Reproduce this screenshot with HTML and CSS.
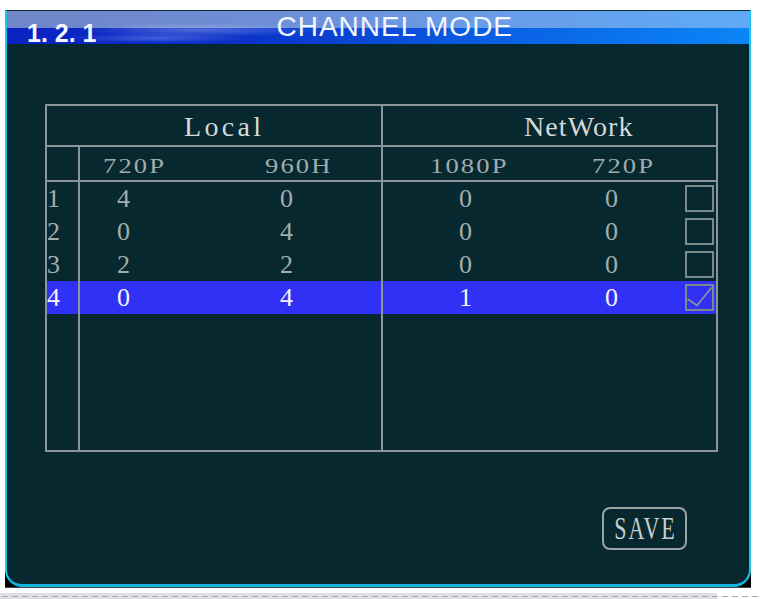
FILE: index.html
```html
<!DOCTYPE html>
<html>
<head>
<meta charset="utf-8">
<title>CHANNEL MODE</title>
<link rel="stylesheet" href="styles.css">
</head>
<body>
<div class="frame">
  <div class="panel">
    <div class="titlebar">
      <span class="crumb">1. 2. 1</span>
      <span class="title">CHANNEL MODE</span>
    </div>
    <div class="content">
      <div class="grid">
        <div class="cell h1 local br"><span class="big">Local</span></div>
        <div class="cell h1 net"><span class="big">NetWork</span></div>

        <div class="cell bt br"></div>
        <div class="cell bt hd p-l1h"><span class="hdt">720P</span></div>
        <div class="cell bt hd br p-l2h"><span class="hdt">960H</span></div>
        <div class="cell bt hd p-n1h"><span class="hdt">1080P</span></div>
        <div class="cell bt hd p-n2h"><span class="hdt">720P</span></div>
        <div class="cell bt"></div>

        <div class="cell bt br num">1</div>
        <div class="cell bt val p-l1">4</div>
        <div class="cell bt val br p-l2">0</div>
        <div class="cell bt val p-n1">0</div>
        <div class="cell bt val p-n2">0</div>
        <div class="cell bt chk"><span class="box"></span></div>

        <div class="cell br num">2</div>
        <div class="cell val p-l1">0</div>
        <div class="cell val br p-l2">4</div>
        <div class="cell val p-n1">0</div>
        <div class="cell val p-n2">0</div>
        <div class="cell chk"><span class="box"></span></div>

        <div class="cell br num">3</div>
        <div class="cell val p-l1">2</div>
        <div class="cell val br p-l2">2</div>
        <div class="cell val p-n1">0</div>
        <div class="cell val p-n2">0</div>
        <div class="cell chk"><span class="box"></span></div>

        <div class="cell br num sel">4</div>
        <div class="cell val sel p-l1">0</div>
        <div class="cell val br sel p-l2">4</div>
        <div class="cell val sel p-n1">1</div>
        <div class="cell val sel p-n2">0</div>
        <div class="cell chk sel"><span class="box"><svg width="25" height="23" viewBox="0 0 25 23"><path d="M0.5 13 L10 19.5 L24.5 1.5" fill="none" stroke="#8c9898" stroke-width="1.6"/></svg></span></div>

        <div class="cell br"></div>
        <div class="cell br span-local2"></div>
        <div class="cell span-net"></div>
      </div>
      <button class="save"><span>SAVE</span></button>
    </div>
  </div>
</div>
<div class="dash"></div>
</body>
</html>
```

FILE: styles.css
```css
html, body {
  margin: 0;
  padding: 0;
  background: #ffffff;
  overflow: hidden;
  width: 760px;
  height: 599px;
}

.frame {
  margin: 10px 0 0 5px;
  width: 746px;
  height: 577px;
  background: #000000;
  border-bottom: 1px solid #3c4446;
}

.panel {
  box-sizing: border-box;
  height: 577px;
  background: #082830;
  border-top: 1px solid #0c2c34;
  border-left: 2px solid #19c6ec;
  border-right: 2px solid #19c6ec;
  border-bottom: 3px solid #14b4e0;
  border-radius: 0 0 17px 17px;
  display: flex;
  flex-direction: column;
}

.titlebar {
  height: 33px;
  display: flex;
  align-items: flex-start;
  background:
    radial-gradient(ellipse 120px 7px at 190px 19px, rgba(205, 220, 255, 0.35), rgba(205, 220, 255, 0) 100%),
    radial-gradient(ellipse 90px 5px at 150px 27px, rgba(120, 150, 240, 0.5), rgba(120, 150, 240, 0) 100%),
    linear-gradient(90deg, #6f86c8 0%, #6e8cd4 30%, #6a9ce8 65%, #5eaaf6 100%) 0 0 / 100% 17px no-repeat,
    linear-gradient(90deg, #0a22c0 0%, #0b30c8 30%, #0a5ee4 65%, #0a86f6 100%);
  font-family: "Liberation Sans", Arial, sans-serif;
  color: #ffffff;
}

.crumb {
  margin: 10px 0 0 20px;
  font-size: 25px;
  line-height: 25px;
  font-weight: bold;
  white-space: pre;
  color: #f4f6ff;
}

.title {
  margin: 2px 0 0 180px;
  font-size: 28px;
  line-height: 28px;
  letter-spacing: 1px;
  color: #f2f6ff;
}

.content {
  flex: 1;
  padding: 60px 0 0 38px;
  display: flex;
  flex-direction: column;
}

.grid {
  box-sizing: border-box;
  width: 673px;
  height: 348px;
  border: 2px solid #8a9597;
  display: grid;
  grid-template-columns: 33px 151px 152px 167px 130px 36px;
  grid-template-rows: 39px 35px 35px 33px 33px 33px 1fr;
  font-family: "Liberation Serif", "Times New Roman", serif;
}

.cell {
  box-sizing: border-box;
  display: flex;
  align-items: center;
  min-width: 0;
  white-space: nowrap;
}

.br { border-right: 2px solid #8a9597; }
.bt { border-top: 2px solid #8a9597; }

.h1 { grid-column: span 3; }
.local { padding-left: 137px; }
.net { padding-left: 141px; }

.big {
  font-size: 28px;
  line-height: 28px;
  color: #d4d9da;
  padding-top: 2px;
}
.local .big { letter-spacing: 3.3px; }
.net .big { letter-spacing: 1.1px; }

.hd {
  color: #a2abac;
  padding-top: 4px;
}
.hdt {
  display: inline-block;
  font-size: 20px;
  line-height: 20px;
  letter-spacing: 1.6px;
  transform: scaleX(1.33);
  transform-origin: 0 50%;
}
.p-l1h { padding-left: 23px; }
.p-l2h { padding-left: 34px; }
.p-n1h { padding-left: 47px; }
.p-n2h { padding-left: 42px; }

.val, .num {
  font-size: 26px;
  line-height: 26px;
  color: #a3adae;
}
.num { padding-left: 0; }
.p-l1 { padding-left: 37px; }
.p-l2 { padding-left: 49px; }
.p-n1 { padding-left: 76px; }
.p-n2 { padding-left: 55px; }

.sel {
  background: #3131f6;
  color: #f4f4ff;
}

.chk { padding-left: 5px; }
.box {
  box-sizing: border-box;
  width: 29px;
  height: 27px;
  border: 2px solid #7c8a8b;
  display: block;
}
.box svg { display: block; }

.span-local2 { grid-column: span 2; }
.span-net { grid-column: span 3; }

.save {
  align-self: flex-end;
  margin: 55px 62px 0 0;
  box-sizing: border-box;
  width: 85px;
  height: 43px;
  padding: 0;
  border: 2px solid #9aa4a5;
  border-radius: 8px;
  background: transparent;
  display: flex;
  align-items: center;
  justify-content: center;
  font-family: "Liberation Serif", "Times New Roman", serif;
  color: #c6cfd0;
}
.save span {
  display: inline-block;
  font-size: 22px;
  line-height: 22px;
  letter-spacing: 2px;
  margin-right: -2px;
  transform: scaleY(1.42);
  padding-top: 1px;
}

.dash {
  margin-top: 5px;
  height: 6px;
  width: 760px;
  background:
    repeating-linear-gradient(90deg, #a9a9ad 0 6px, rgba(0,0,0,0) 6px 10px) 2px 3px / 100% 1px no-repeat,
    linear-gradient(#dfdfe3, #dfdfe3) 0 0 / 717px 100% no-repeat;
}
```
